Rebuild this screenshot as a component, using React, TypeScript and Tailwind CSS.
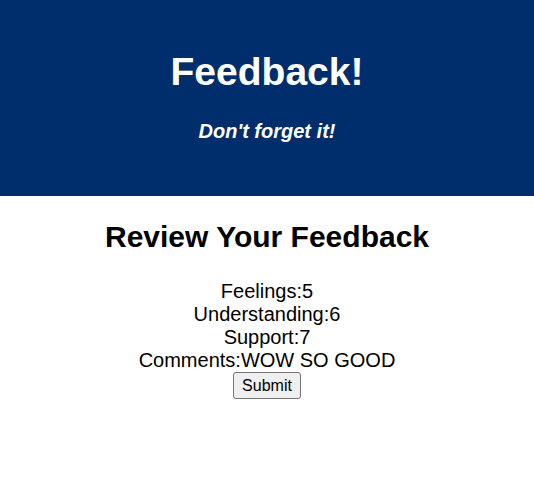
const review = [
  { label: "Feelings", value: "5" },
  { label: "Understanding", value: "6" },
  { label: "Support", value: "7" },
  { label: "Comments", value: "WOW SO GOOD" },
];

const App = () => {
  return (
    <div className="min-h-screen bg-white text-center font-['Liberation_Sans',Arial,sans-serif] text-black">
      <header className="h-[196px] bg-[#002d6b] pt-[49px] text-white">
        <h1 className="text-[39px] font-bold leading-[45px]">Feedback!</h1>
        <h4 className="mt-[26px] text-[20px] font-bold italic leading-[23px]">Don't forget it!</h4>
      </header>

      <main>
        <h2 className="mt-[24px] text-[30px] font-bold leading-[34px]">Review Your Feedback</h2>
        <div className="mt-[26px] text-[20px] leading-[23px]">
          {review.map((item) => (
            <p key={item.label}>
              {item.label}:{item.value}
            </p>
          ))}
        </div>
        <button className="rounded-[3px] border border-[#767676] bg-[#efefef] px-2 py-[3px] text-[16px] leading-[19px] text-black">
          Submit
        </button>
      </main>
    </div>
  );
};

export default App;
